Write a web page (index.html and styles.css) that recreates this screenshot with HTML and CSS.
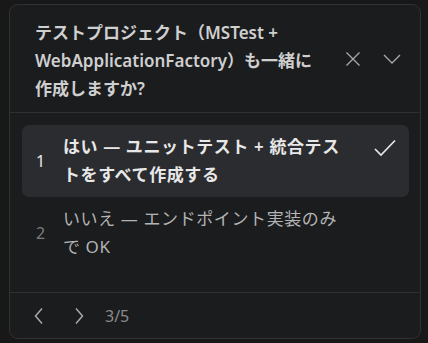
FILE: index.html
```html
<!DOCTYPE html>
<html lang="ja">
<head>
  <meta charset="UTF-8">
  <title>Question</title>
  <link rel="stylesheet" href="styles.css">
</head>
<body>
  <div class="ask">
    <div class="ask__head">
      <h2 class="ask__title">テストプロジェクト（MSTest + WebApplicationFactory）も一緒に作成しますか?</h2>
      <div class="ask__tools">
        <button class="icon-btn" title="閉じる">
          <svg width="16" height="16" viewBox="0 0 16 16"><path d="M1.5 1.5l13 13M14.5 1.5l-13 13" stroke="currentColor" stroke-width="1.3" fill="none"/></svg>
        </button>
        <button class="icon-btn" title="折りたたむ">
          <svg width="18" height="16" viewBox="0 0 18 16"><path d="M1 4l8 8 8-8" stroke="currentColor" stroke-width="1.3" fill="none"/></svg>
        </button>
      </div>
    </div>

    <ul class="options">
      <li class="option option--active">
        <span class="option__num">1</span>
        <span class="option__text">はい — ユニットテスト + 統合テストをすべて作成する</span>
        <svg class="option__check" width="22" height="20" viewBox="0 0 22 20"><path d="M1 11l6 6L21 2.5" stroke="currentColor" stroke-width="1.7" fill="none"/></svg>
      </li>
      <li class="option">
        <span class="option__num">2</span>
        <span class="option__text">いいえ — エンドポイント実装のみで OK</span>
      </li>
    </ul>

    <div class="ask__foot">
      <button class="icon-btn">
        <svg width="16" height="18" viewBox="0 0 16 18"><path d="M11 1.5L4.5 9l6.5 7.5" stroke="currentColor" stroke-width="1.5" fill="none"/></svg>
      </button>
      <button class="icon-btn">
        <svg width="16" height="18" viewBox="0 0 16 18"><path d="M5 1.5L11.5 9 5 16.5" stroke="currentColor" stroke-width="1.5" fill="none"/></svg>
      </button>
      <span class="ask__page">3/5</span>
    </div>
  </div>
</body>
</html>
```

FILE: styles.css
```css
html {
  box-sizing: border-box;
  background: #181818;
}

*, *:before, *:after {
  box-sizing: inherit;
}

body {
  margin: 0;
  padding: 4px 7px 4px 9px;
  font-family: "Noto Sans", "Noto Sans CJK JP", sans-serif;
  color: #cccccc;
}

.ask {
  height: 335px;
  border: 1px solid #303133;
  border-radius: 9px;
  background: #1b1c1e;
  display: flex;
  flex-direction: column;
}

.ask__head {
  display: flex;
  align-items: center;
  padding: 14px 16px 9px 25px;
  border-bottom: 1px solid #2f3032;
}

.ask__title {
  flex: 1;
  margin: 0;
  max-width: 284px;
  font-size: 17px;
  line-height: 28px;
  font-weight: 600;
  color: #cfcfcf;
}

.ask__tools {
  display: flex;
  gap: 15px;
  margin-left: auto;
  margin-top: -4px;
}

.icon-btn {
  background: none;
  border: 0;
  padding: 0;
  width: 24px;
  height: 24px;
  display: flex;
  align-items: center;
  justify-content: center;
  color: #a8a8a8;
  cursor: pointer;
}

.options {
  list-style: none;
  margin: 0;
  padding: 12px 11px 0 12px;
  flex: 1;
}

.option {
  display: flex;
  align-items: center;
  padding: 8px 13px 8px 0;
  border-radius: 7px;
  font-size: 17px;
  line-height: 28px;
  color: #b4b4b4;
}

.option--active {
  background: #2b2c2f;
  color: #e8e8e8;
  font-weight: 600;
}

.option__num {
  width: 41px;
  padding-left: 14px;
  color: #7c7c7c;
  font-size: 16px;
  font-weight: 400;
  flex: none;
}

.option--active .option__num {
  color: #e8e8e8;
}

.option__text {
  flex: 1;
  max-width: 284px;
  letter-spacing: 0.6px;
}

.option__check {
  align-self: flex-start;
  margin: 5px 0 0 auto;
  color: #e6e6e6;
}

.ask__foot {
  display: flex;
  align-items: center;
  gap: 16px;
  height: 46px;
  padding: 0 0 0 17px;
  border-top: 1px solid #2f3032;
}

.ask__page {
  color: #8a8a8a;
  font-size: 16px;
  margin-left: -2px;
}
```
